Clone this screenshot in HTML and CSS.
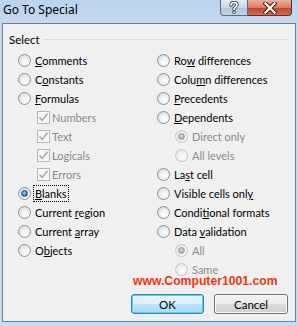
FILE: index.html
```html
<!DOCTYPE html>
<html lang="en">
  <head>
    <title>Go To Special</title>
    <link rel="stylesheet" href="styles.css">
  </head>

  <body>
    <div class="Window">
      <!-- title bar -->
      <div class="TitleBar">
        <span class="title">Go To Special</span>
        <div class="capButtons">
          <div class="capBtn help">
            <svg width="12" height="13" viewBox="0 0 12 13">
              <path d="M3 4.2 Q3 1.5 6 1.5 Q9 1.5 9 4 Q9 5.6 7 6.6 Q6 7.1 6 8.6" fill="none" stroke="#3a4a5e" stroke-width="3.4" stroke-linecap="round"/>
              <path d="M3 4.2 Q3 1.5 6 1.5 Q9 1.5 9 4 Q9 5.6 7 6.6 Q6 7.1 6 8.6" fill="none" stroke="#fff" stroke-width="1.6" stroke-linecap="round"/>
              <circle cx="6" cy="11.3" r="1.7" fill="#3a4a5e"/>
              <circle cx="6" cy="11.3" r="0.9" fill="#fff"/>
            </svg>
          </div>
          <div class="capBtn close">
            <svg width="14" height="12" viewBox="0 0 14 12">
              <path d="M2.5 1.5 L11.5 10.5 M11.5 1.5 L2.5 10.5" stroke="#4a1a14" stroke-width="4.2" stroke-linecap="square"/>
              <path d="M2.5 1.5 L11.5 10.5 M11.5 1.5 L2.5 10.5" stroke="#fff" stroke-width="2.2" stroke-linecap="square"/>
            </svg>
          </div>
        </div>
      </div>

      <!-- dialog body -->
      <div class="Client">
        <div class="groupHead">
          <span>Select</span>
          <div class="groupLine"></div>
        </div>

        <div class="options">
          <div class="col">
            <div class="row"><span class="radio"></span><label><u>C</u>omments</label></div>
            <div class="row"><span class="radio"></span><label>C<u>o</u>nstants</label></div>
            <div class="row"><span class="radio"></span><label><u>F</u>ormulas</label></div>
            <div class="row sub"><span class="check"><svg width="11" height="11" viewBox="0 0 11 11"><path d="M1.5 5.5 L4.2 8.4 L9.5 1.8" fill="none" stroke="#a3a9b0" stroke-width="1.6"/></svg></span><label class="dim">Numbers</label></div>
            <div class="row sub"><span class="check"><svg width="11" height="11" viewBox="0 0 11 11"><path d="M1.5 5.5 L4.2 8.4 L9.5 1.8" fill="none" stroke="#a3a9b0" stroke-width="1.6"/></svg></span><label class="dim">Text</label></div>
            <div class="row sub"><span class="check"><svg width="11" height="11" viewBox="0 0 11 11"><path d="M1.5 5.5 L4.2 8.4 L9.5 1.8" fill="none" stroke="#a3a9b0" stroke-width="1.6"/></svg></span><label class="dim">Logicals</label></div>
            <div class="row sub"><span class="check"><svg width="11" height="11" viewBox="0 0 11 11"><path d="M1.5 5.5 L4.2 8.4 L9.5 1.8" fill="none" stroke="#a3a9b0" stroke-width="1.6"/></svg></span><label class="dim">Errors</label></div>
            <div class="row"><span class="radio on"></span><label class="focus"><u>B</u>lanks</label></div>
            <div class="row"><span class="radio"></span><label>Current <u>r</u>egion</label></div>
            <div class="row"><span class="radio"></span><label>Current <u>a</u>rray</label></div>
            <div class="row"><span class="radio"></span><label>O<u>b</u>jects</label></div>
          </div>

          <div class="col">
            <div class="row"><span class="radio"></span><label>Ro<u>w</u> differences</label></div>
            <div class="row"><span class="radio"></span><label>Colu<u>m</u>n differences</label></div>
            <div class="row"><span class="radio"></span><label><u>P</u>recedents</label></div>
            <div class="row"><span class="radio"></span><label><u>D</u>ependents</label></div>
            <div class="row sub2"><span class="radio dim on"></span><label class="dim">Direct only</label></div>
            <div class="row sub2"><span class="radio dim"></span><label class="dim">All levels</label></div>
            <div class="row"><span class="radio"></span><label>La<u>s</u>t cell</label></div>
            <div class="row"><span class="radio"></span><label>Visible cells onl<u>y</u></label></div>
            <div class="row"><span class="radio"></span><label>Condi<u>t</u>ional formats</label></div>
            <div class="row"><span class="radio"></span><label>Data <u>v</u>alidation</label></div>
            <div class="row sub2"><span class="radio dim on"></span><label class="dim">All</label></div>
            <div class="row sub2 last"><span class="radio dim"></span><label class="dim">Same</label></div>
          </div>
        </div>

        <!-- watermark over the dialog -->
        <div class="watermark">www.Computer1001.com</div>

        <div class="buttons">
          <button class="btn default">OK</button>
          <button class="btn">Cancel</button>
        </div>
      </div>
    </div>
  </body>
</html>
```

FILE: styles.css
```css
body {
  margin: 0;
}

.Window {
  width: 298px;
  height: 326px;
  background: linear-gradient(#bcd3ec, #c6daf0 30px, #c8dcf1);
  font-family: "Noto Sans", sans-serif;
  overflow: hidden;
}

.TitleBar {
  height: 23px;
  display: flex;
  justify-content: space-between;
  align-items: flex-start;
}

.TitleBar .title {
  font-size: 12px;
  line-height: 20px;
  padding-left: 3px;
  color: #000;
}

.capButtons {
  display: flex;
  margin-right: 6px;
}

.capBtn {
  height: 16px;
  display: flex;
  align-items: center;
  justify-content: center;
  box-sizing: border-box;
  border: 1px solid #5c6c80;
  border-top: none;
}

.capBtn.help {
  width: 28px;
  border-radius: 0 0 0 4px;
  background: linear-gradient(#e3ebf5, #c9d7e7 50%, #b2c4d9 51%, #c3d3e5);
}

.capBtn.close {
  width: 44px;
  border-left: none;
  border-color: #6b2a22;
  border-radius: 0 0 4px 0;
  background: linear-gradient(#e9b0a0, #d77a66 50%, #c2432c 51%, #d46a4c);
}

.Client {
  position: relative;
  margin-left: 2px;
  width: 294px;
  height: 299px;
  box-sizing: border-box;
  border: 1px solid #6f8194;
  background: #f0f0f0;
  font-family: Lato, "Noto Sans", sans-serif;
  font-size: 11px;
  color: #000;
}

.groupHead {
  display: flex;
  align-items: center;
  height: 14px;
  margin-top: 8px;
  padding: 0 6px;
  font-size: 11.5px;
}

.groupLine {
  flex: 1;
  height: 1px;
  margin-left: 4px;
  background: #d5dfe5;
}

.options {
  display: grid;
  grid-template-columns: 154px 1fr;
  margin-top: 5px;
}

.col {
  display: flex;
  flex-direction: column;
}

.col:first-child {
  padding-left: 15px;
}

.row {
  height: 19px;
  display: flex;
  align-items: center;
  gap: 2px;
}

.row.sub {
  margin-left: 19px;
  gap: 0;
}

.row.sub2 {
  margin-left: 18px;
}

label {
  padding: 0 1px;
  line-height: 15px;
  border: 1px solid transparent;
  white-space: nowrap;
}

label.dim {
  color: #8a8a8a;
}

label.focus {
  border: 1px dotted #000;
}

.row.last label {
  line-height: 12px;
}

.radio {
  position: relative;
  width: 13px;
  height: 13px;
  flex: none;
  box-sizing: border-box;
  border-radius: 50%;
  border: 1px solid #8e9194;
  background: radial-gradient(circle at 60% 65%, #ffffff 0, #f4f4f4 35%, #d6d6d6 90%);
}

.radio.on::after {
  content: "";
  position: absolute;
  left: 2px;
  top: 2px;
  width: 7px;
  height: 7px;
  box-sizing: border-box;
  border-radius: 50%;
  border: 1px solid #194c86;
  background: radial-gradient(circle at 45% 40%, #a9ddff 0, #3d93de 45%, #0f4c93 100%);
}

.radio.dim {
  border-color: #c3c5c7;
  background: radial-gradient(circle at 60% 65%, #fdfdfd 0, #f2f2f2 40%, #e2e2e2 90%);
}

.radio.dim.on::after {
  border-color: #9a9a9a;
  background: radial-gradient(circle at 45% 40%, #e0e0e0 0, #b4b4b4 50%, #969696 100%);
}

.check {
  width: 13px;
  height: 13px;
  flex: none;
  box-sizing: border-box;
  border: 1px solid #b6b9bc;
  background: #f6f6f6;
  display: flex;
  align-items: center;
  justify-content: center;
}

.check svg {
  display: block;
}

.watermark {
  position: absolute;
  left: 130px;
  top: 252px;
  font-family: "Liberation Sans", Arial, sans-serif;
  font-weight: bold;
  font-size: 12.2px;
  line-height: 10px;
  color: #f23418;
}

.buttons {
  display: flex;
  justify-content: flex-end;
  gap: 10px;
  margin-top: 15px;
  padding-right: 7px;
}

.btn {
  width: 73px;
  height: 20px;
  padding: 0;
  border: 1px solid #707070;
  border-radius: 3px;
  background: linear-gradient(#f2f2f2, #ebebeb 50%, #dddddd 51%, #cfcfcf);
  font-family: Lato, "Noto Sans", sans-serif;
  font-size: 11.5px;
  color: #000;
  box-shadow: inset 0 0 0 1px #fcfcfc;
}

.btn.default {
  border-color: #3c7fb1;
  box-shadow: inset 0 0 0 1px #48d7fb;
  background: linear-gradient(#eaf6fd, #d9f0fc 50%, #bee6fd 51%, #a7d9f5);
}

.btn + .btn {
  width: 74px;
}
```
